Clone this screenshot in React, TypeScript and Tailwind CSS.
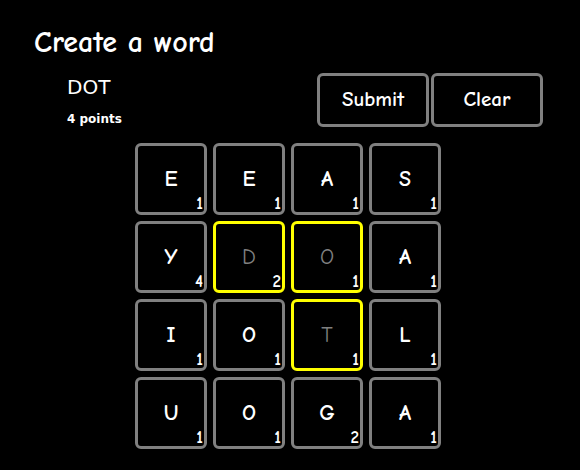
const comic = "font-['Comic_Sans_MS','Comic_Neue','DejaVu_Sans',sans-serif]";

const tiles = [
  { letter: "E", points: 1 },
  { letter: "E", points: 1 },
  { letter: "A", points: 1 },
  { letter: "S", points: 1 },
  { letter: "Y", points: 4 },
  { letter: "D", points: 2, selected: true },
  { letter: "O", points: 1, selected: true },
  { letter: "A", points: 1 },
  { letter: "I", points: 1 },
  { letter: "O", points: 1 },
  { letter: "T", points: 1, selected: true },
  { letter: "L", points: 1 },
  { letter: "U", points: 1 },
  { letter: "O", points: 1 },
  { letter: "G", points: 2 },
  { letter: "A", points: 1 },
];

export default function App() {
  return (
    <div className={`w-[580px] h-[470px] bg-black text-white overflow-hidden ${comic}`}>
      <h1 className="pl-[34px] pt-[24px] text-[30px] leading-[38px] font-bold">
        Create a word
      </h1>

      {/* Current word + actions */}
      <div className="flex items-start justify-between pl-[67px] pr-[37px] mt-[11px]">
        <div>
          <div className="font-['DejaVu_Sans',sans-serif] text-[20px] leading-[24px] mt-[2px]">
            DOT
          </div>
          <div className="font-['DejaVu_Sans',sans-serif] text-[12px] font-bold leading-[16px] mt-[12px]">
            4 points
          </div>
        </div>
        <div className="flex gap-[2px]">
          <button className="w-[112px] h-[54px] border-[3px] border-[#808080] rounded-[6px] text-[21px] font-bold">
            Submit
          </button>
          <button className="w-[112px] h-[54px] border-[3px] border-[#808080] rounded-[6px] text-[21px] font-bold">
            Clear
          </button>
        </div>
      </div>

      {/* Board */}
      <div className="grid grid-cols-[repeat(4,72px)] gap-[6px] ml-[135px] mt-[16px]">
        {tiles.map((t, i) => (
          <div
            key={i}
            className={`relative w-[72px] h-[72px] rounded-[6px] border-[3px] flex items-center justify-center ${
              t.selected ? "border-[#ffff00]" : "border-[#808080]"
            }`}
          >
            <span
              className={`text-[22px] leading-none ${
                t.selected ? "text-[#808080] font-normal" : "text-white font-bold"
              }`}
            >
              {t.letter}
            </span>
            <span className="absolute right-[1px] bottom-[0px] text-[17px] leading-[17px] font-bold text-white">
              {t.points}
            </span>
          </div>
        ))}
      </div>
    </div>
  );
}
